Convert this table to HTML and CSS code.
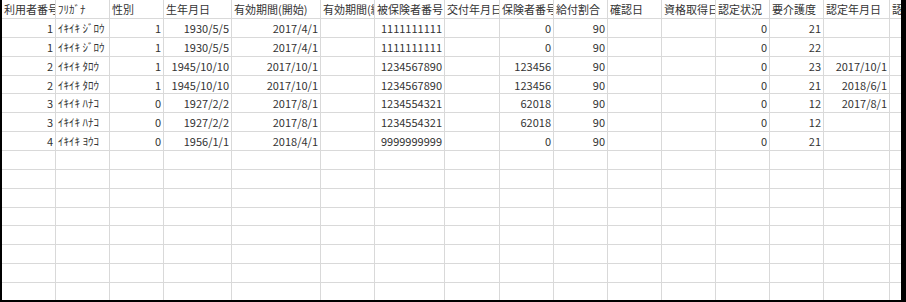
FILE: index.html
```html
<!DOCTYPE html>
<html lang="ja">
<head>
<meta charset="utf-8">
<title>利用者一覧</title>
<link rel="stylesheet" href="styles.css">
</head>
<body>
<div class="frame">
  <div class="sheet">
    <div class="c">利用者番号</div><div class="c">ﾌﾘｶﾞﾅ</div><div class="c">性別</div><div class="c">生年月日</div><div class="c">有効期間(開始)</div><div class="c">有効期間(終了)</div><div class="c">被保険者番号</div><div class="c">交付年月日</div><div class="c">保険者番号</div><div class="c">給付割合</div><div class="c">確認日</div><div class="c">資格取得日</div><div class="c">認定状況</div><div class="c">要介護度</div><div class="c">認定年月日</div><div class="c">認定有効期間</div>

    <div class="c n">1</div><div class="c">ｲｷｲｷ ｼﾞﾛｳ</div><div class="c n">1</div><div class="c n">1930/5/5</div><div class="c n">2017/4/1</div><div class="c"></div><div class="c n">1111111111</div><div class="c"></div><div class="c n">0</div><div class="c n">90</div><div class="c"></div><div class="c"></div><div class="c n">0</div><div class="c n">21</div><div class="c"></div><div class="c"></div>

    <div class="c n">1</div><div class="c">ｲｷｲｷ ｼﾞﾛｳ</div><div class="c n">1</div><div class="c n">1930/5/5</div><div class="c n">2017/4/1</div><div class="c"></div><div class="c n">1111111111</div><div class="c"></div><div class="c n">0</div><div class="c n">90</div><div class="c"></div><div class="c"></div><div class="c n">0</div><div class="c n">22</div><div class="c"></div><div class="c"></div>

    <div class="c n">2</div><div class="c">ｲｷｲｷ ﾀﾛｳ</div><div class="c n">1</div><div class="c n">1945/10/10</div><div class="c n">2017/10/1</div><div class="c"></div><div class="c n">1234567890</div><div class="c"></div><div class="c n">123456</div><div class="c n">90</div><div class="c"></div><div class="c"></div><div class="c n">0</div><div class="c n">23</div><div class="c n">2017/10/1</div><div class="c"></div>

    <div class="c n">2</div><div class="c">ｲｷｲｷ ﾀﾛｳ</div><div class="c n">1</div><div class="c n">1945/10/10</div><div class="c n">2017/10/1</div><div class="c"></div><div class="c n">1234567890</div><div class="c"></div><div class="c n">123456</div><div class="c n">90</div><div class="c"></div><div class="c"></div><div class="c n">0</div><div class="c n">21</div><div class="c n">2018/6/1</div><div class="c"></div>

    <div class="c n">3</div><div class="c">ｲｷｲｷ ﾊﾅｺ</div><div class="c n">0</div><div class="c n">1927/2/2</div><div class="c n">2017/8/1</div><div class="c"></div><div class="c n">1234554321</div><div class="c"></div><div class="c n">62018</div><div class="c n">90</div><div class="c"></div><div class="c"></div><div class="c n">0</div><div class="c n">12</div><div class="c n">2017/8/1</div><div class="c"></div>

    <div class="c n">3</div><div class="c">ｲｷｲｷ ﾊﾅｺ</div><div class="c n">0</div><div class="c n">1927/2/2</div><div class="c n">2017/8/1</div><div class="c"></div><div class="c n">1234554321</div><div class="c"></div><div class="c n">62018</div><div class="c n">90</div><div class="c"></div><div class="c"></div><div class="c n">0</div><div class="c n">12</div><div class="c"></div><div class="c"></div>

    <div class="c n">4</div><div class="c">ｲｷｲｷ ﾖｳｺ</div><div class="c n">0</div><div class="c n">1956/1/1</div><div class="c n">2018/4/1</div><div class="c"></div><div class="c n">9999999999</div><div class="c"></div><div class="c n">0</div><div class="c n">90</div><div class="c"></div><div class="c"></div><div class="c n">0</div><div class="c n">21</div><div class="c"></div><div class="c"></div>

    <div class="c"></div><div class="c"></div><div class="c"></div><div class="c"></div><div class="c"></div><div class="c"></div><div class="c"></div><div class="c"></div><div class="c"></div><div class="c"></div><div class="c"></div><div class="c"></div><div class="c"></div><div class="c"></div><div class="c"></div><div class="c"></div>
    <div class="c"></div><div class="c"></div><div class="c"></div><div class="c"></div><div class="c"></div><div class="c"></div><div class="c"></div><div class="c"></div><div class="c"></div><div class="c"></div><div class="c"></div><div class="c"></div><div class="c"></div><div class="c"></div><div class="c"></div><div class="c"></div>
    <div class="c"></div><div class="c"></div><div class="c"></div><div class="c"></div><div class="c"></div><div class="c"></div><div class="c"></div><div class="c"></div><div class="c"></div><div class="c"></div><div class="c"></div><div class="c"></div><div class="c"></div><div class="c"></div><div class="c"></div><div class="c"></div>
    <div class="c"></div><div class="c"></div><div class="c"></div><div class="c"></div><div class="c"></div><div class="c"></div><div class="c"></div><div class="c"></div><div class="c"></div><div class="c"></div><div class="c"></div><div class="c"></div><div class="c"></div><div class="c"></div><div class="c"></div><div class="c"></div>
    <div class="c"></div><div class="c"></div><div class="c"></div><div class="c"></div><div class="c"></div><div class="c"></div><div class="c"></div><div class="c"></div><div class="c"></div><div class="c"></div><div class="c"></div><div class="c"></div><div class="c"></div><div class="c"></div><div class="c"></div><div class="c"></div>
    <div class="c"></div><div class="c"></div><div class="c"></div><div class="c"></div><div class="c"></div><div class="c"></div><div class="c"></div><div class="c"></div><div class="c"></div><div class="c"></div><div class="c"></div><div class="c"></div><div class="c"></div><div class="c"></div><div class="c"></div><div class="c"></div>
    <div class="c"></div><div class="c"></div><div class="c"></div><div class="c"></div><div class="c"></div><div class="c"></div><div class="c"></div><div class="c"></div><div class="c"></div><div class="c"></div><div class="c"></div><div class="c"></div><div class="c"></div><div class="c"></div><div class="c"></div><div class="c"></div>
    <div class="c"></div><div class="c"></div><div class="c"></div><div class="c"></div><div class="c"></div><div class="c"></div><div class="c"></div><div class="c"></div><div class="c"></div><div class="c"></div><div class="c"></div><div class="c"></div><div class="c"></div><div class="c"></div><div class="c"></div><div class="c"></div>
  </div>
</div>
</body>
</html>
```

FILE: styles.css
```css
html, body {
  margin: 0;
  padding: 0;
  background: #ffffff;
}

.frame {
  width: 906px;
  height: 302px;
  box-sizing: border-box;
  border-left: 2px solid #000;
  border-right: 5px solid #000;
  border-bottom: 2px solid #000;
  overflow: hidden;
  background: #fff;
}

.sheet {
  display: grid;
  grid-template-columns: 54px 54px 54px 68px 89px 54px 70px 55px 54px 54px 54px 54px 54px 54px 66px 60px;
  grid-template-rows: 19px repeat(15, 18.86px);
  font-family: "Noto Sans CJK JP", "Noto Sans", sans-serif;
  font-size: 11px;
  color: #333333;
}

.c {
  box-sizing: border-box;
  border-right: 1px solid #d9d9d9;
  border-bottom: 1px solid #d9d9d9;
  padding: 1px 2px 0 2px;
  line-height: 17px;
  white-space: nowrap;
  overflow: hidden;
  text-align: left;
}

.n {
  text-align: right;
}
```
